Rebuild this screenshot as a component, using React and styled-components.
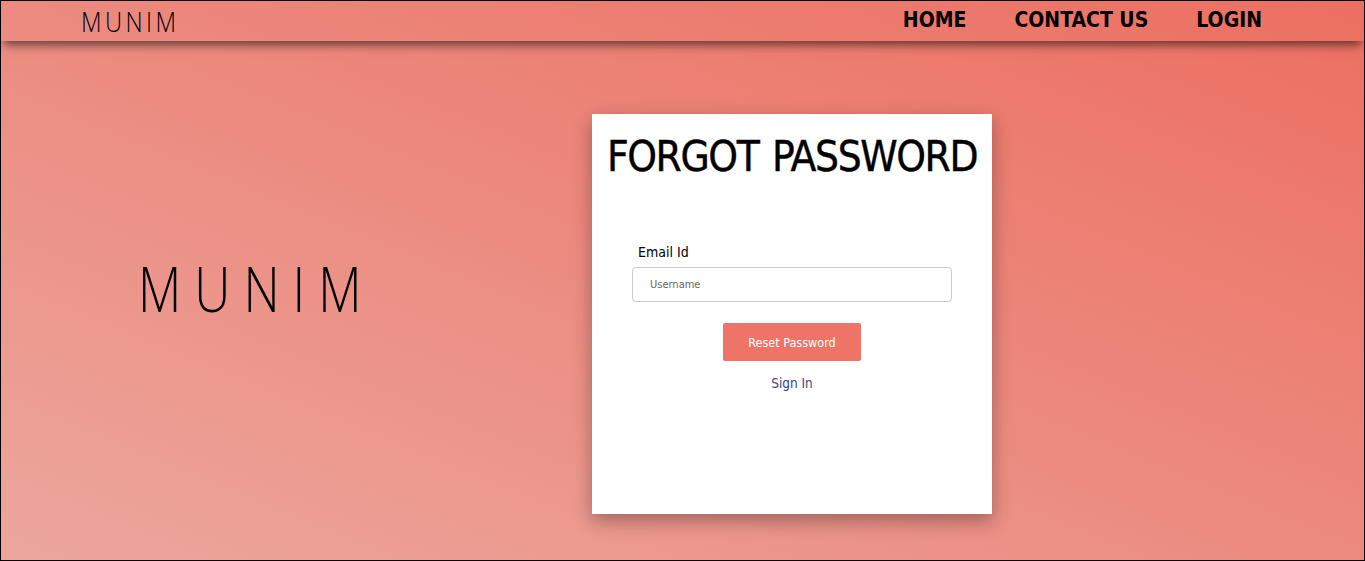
import React, { useState } from "react";
import styled, { createGlobalStyle } from "styled-components";

const GlobalStyle = createGlobalStyle`
  html, body {
    margin: 0;
    padding: 0;
  }
  * {
    box-sizing: border-box;
  }
`;

const Page = styled.div`
  height: 561px;
  border: 1px solid #000;
  background: linear-gradient(to top right, #eca79d 0%, #ec8a7f 50%, #ec6f61 100%);
  font-family: "DejaVu Sans Condensed", "DejaVu Sans", sans-serif;
  font-stretch: condensed;
  display: flex;
  flex-direction: column;
  overflow: hidden;
`;

const Nav = styled.nav`
  height: 40px;
  flex-shrink: 0;
  display: flex;
  align-items: center;
  justify-content: space-between;
  padding: 0 102px 0 80px;
  box-shadow: 0 7px 9px -3px rgba(0, 0, 0, 0.55);
  position: relative;
  z-index: 1;
`;

const Brand = styled.div`
  font-family: "Open Sans", sans-serif;
  font-weight: 300;
  font-stretch: normal;
  font-size: 28px;
  letter-spacing: 4px;
  color: #000;
  transform: scaleX(0.85);
  transform-origin: left center;
`;

const Links = styled.div`
  display: flex;
  gap: 48px;
  margin-top: -3px;
`;

const NavLink = styled.a`
  font-size: 21px;
  font-weight: bold;
  color: #000;
  text-decoration: none;
`;

const Main = styled.main`
  flex: 1;
  display: grid;
  grid-template-columns: 591px 400px;
  align-items: start;
  padding-top: 73px;
`;

const Hero = styled.div`
  padding: 143px 0 0 137px;
`;

const HeroText = styled.span`
  display: inline-block;
  font-family: "Open Sans", sans-serif;
  font-weight: 300;
  font-stretch: normal;
  font-size: 62px;
  letter-spacing: 16px;
  color: #000;
  line-height: 1;
  transform: scaleX(0.81);
  transform-origin: left top;
`;

const Card = styled.div`
  width: 400px;
  height: 400px;
  background: #fff;
  box-shadow: 0 7px 18px rgba(0, 0, 0, 0.32);
  display: flex;
  flex-direction: column;
  align-items: center;
`;

const Title = styled.h1`
  margin: 18px 0 0;
  font-size: 42px;
  font-weight: normal;
  color: #000;
  white-space: nowrap;
  letter-spacing: -1.4px;
  word-spacing: 3px;
  -webkit-text-stroke: 0.4px #000;
`;

const Form = styled.form`
  width: 320px;
  margin-top: 63px;
  display: flex;
  flex-direction: column;
  align-items: center;
`;

const Label = styled.label`
  align-self: flex-start;
  margin-left: 6px;
  font-size: 14px;
  color: #000;
  margin-bottom: 7px;
`;

const Input = styled.input`
  width: 320px;
  height: 35px;
  border: 1px solid #ccc;
  border-radius: 4px;
  padding: 0 17px;
  font-family: inherit;
  font-stretch: condensed;
  font-size: 11px;
  color: #333;
  outline: none;
  &::placeholder {
    color: #666;
  }
`;

const Button = styled.button`
  margin-top: 21px;
  width: 138px;
  height: 38px;
  border: none;
  border-radius: 2px;
  background: #ed7466;
  color: #fff;
  font-family: inherit;
  font-stretch: condensed;
  font-size: 12.5px;
  cursor: pointer;
`;

const SignIn = styled.a`
  margin-top: 14px;
  font-size: 13.5px;
  color: #3a3f8c;
  text-decoration: none;
`;

export default function App() {
  const [email, setEmail] = useState("");
  return (
    <>
      <GlobalStyle />
      <Page>
        <Nav>
          <Brand>MUNIM</Brand>
          <Links>
            <NavLink href="#">HOME</NavLink>
            <NavLink href="#">CONTACT US</NavLink>
            <NavLink href="#">LOGIN</NavLink>
          </Links>
        </Nav>
        <Main>
          <Hero>
            <HeroText>MUNIM</HeroText>
          </Hero>
          <Card>
            <Title>FORGOT PASSWORD</Title>
            <Form onSubmit={e => e.preventDefault()}>
              <Label>Email Id</Label>
              <Input
                placeholder="Username"
                value={email}
                onChange={e => setEmail(e.target.value)}
              />
              <Button type="submit">Reset Password</Button>
              <SignIn href="#">Sign In</SignIn>
            </Form>
          </Card>
        </Main>
      </Page>
    </>
  );
}
